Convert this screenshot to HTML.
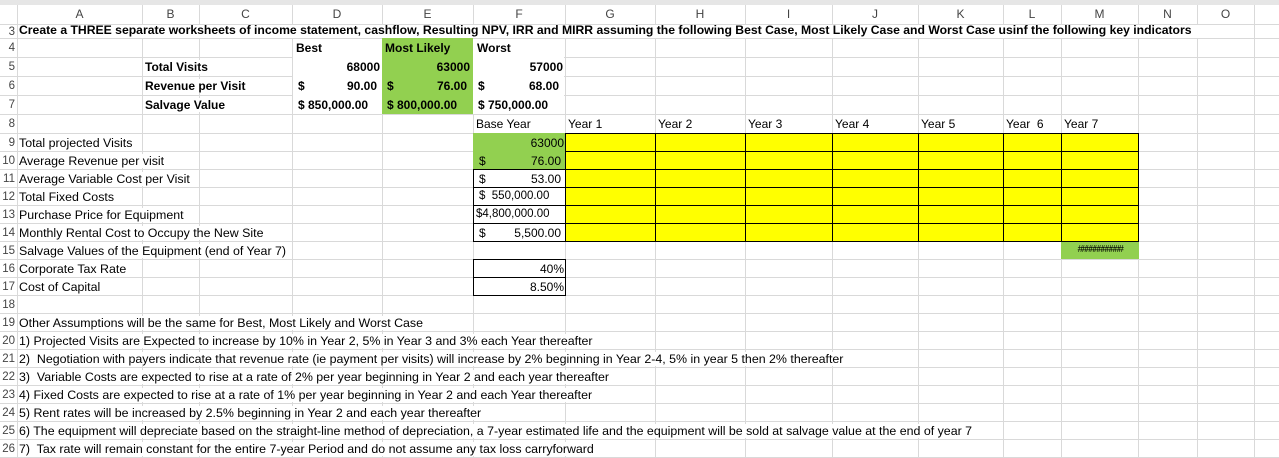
<!DOCTYPE html>
<html><head><meta charset="utf-8"><style>
body{margin:0;width:1279px;height:458px;overflow:hidden;background:#fff;font-family:"Liberation Sans",sans-serif;font-size:12.4px;color:#000;position:relative}
.a{position:absolute;white-space:nowrap;box-sizing:border-box}
.w{background:#fff;padding-right:2px}
.vl{position:absolute;width:1px;background:#d9d9d9}
.hl{position:absolute;height:1px;background:#d9d9d9}
.b{font-weight:bold;font-size:12px}
</style></head><body>
<div class="a" style="left:0;top:0;width:1279px;height:5px;background:#e6e6e6"></div>
<div id="g"></div>
<script>
var X=[17,142,199,292,382,473,565,655,745,832,918,1003,1061,1138,1197,1254,1279];
var Y=[24,38,57,76,95,114,133,151,169,187,205,223,241,259,277,295,313,331,349,367,385,403,421,439,457];
var L="ABCDEFGHIJKLMNO";var h="";
for(var i=0;i<X.length;i++){h+='<div class="vl" style="left:'+X[i]+'px;top:5px;height:453px"></div>';}
for(var j=0;j<Y.length;j++){h+='<div class="hl" style="left:0;top:'+Y[j]+'px;width:1279px"></div>';}
for(var i=0;i<15;i++){h+='<div class="a" style="left:'+X[i]+'px;top:7px;width:'+(X[i+1]-X[i])+'px;text-align:center;color:#444;font-size:12px">'+L[i]+'</div>';}
for(var j=0;j<Y.length-1;j++){h+='<div class="a" style="left:0;top:'+(Y[j]+1)+'px;height:'+(Y[j+1]-Y[j])+'px;width:15px;text-align:right;color:#444;font-size:11.5px;overflow:hidden;line-height:'+(Y[j+1]-Y[j])+'px">'+(j+3)+'</div>';}
document.getElementById('g').innerHTML=h;
</script>
<div class="a" style="left:293px;top:39px;width:271px;height:75px;background:#fff"></div>
<div class="a" style="left:18px;top:25px;width:1180px;height:13px;background:#fff"></div>
<div class="a" style="left:382px;top:38px;width:91px;height:76px;background:#92d050"></div>
<div class="a" style="left:473px;top:133px;width:92px;height:36px;background:#92d050"></div>
<div class="a" style="left:565px;top:133px;width:574px;height:108px;background:#ffff00"></div>
<div class="a" style="left:1061px;top:241px;width:78px;height:18px;background:#92d050"></div>
<div class="a" style="left:565px;top:133px;width:574px;height:109px;border:1px solid #000;border-left:none"></div>
<div id="bb"></div>
<script>
var s="";var cx=[565,655,745,832,918,1003,1061];
for(var i=0;i<cx.length;i++)s+='<div class="a" style="left:'+cx[i]+'px;top:133px;width:1px;height:108px;background:#000"></div>';
var ry=[151,169,187,205,223];
for(var i=0;i<ry.length;i++)s+='<div class="a" style="left:565px;top:'+ry[i]+'px;width:574px;height:1px;background:#000"></div>';
for(var i=2;i<ry.length;i++)s+='<div class="a" style="left:473px;top:'+ry[i]+'px;width:92px;height:1px;background:#000"></div>';
document.getElementById('bb').innerHTML=s;
</script>
<div class="a" style="left:473px;top:169px;width:93px;height:73px;border:1px solid #000;border-right:none"></div>
<div class="a" style="left:473px;top:259px;width:93px;height:37px;border:1px solid #000"></div>
<div class="a" style="left:473px;top:277px;width:93px;height:1px;background:#000"></div>

<div class="a b" style="left:19px;top:23px;font-size:12.2px">Create a THREE separate worksheets of income statement, cashflow, Resulting NPV, IRR and MIRR assuming the following Best Case, Most Likely Case and Worst Case usinf the following key indicators</div>
<div class="a b" style="left:296px;top:41px">Best</div>
<div class="a b" style="left:385px;top:41px">Most Likely</div>
<div class="a b" style="left:477px;top:41px">Worst</div>
<div class="a b w" style="left:145px;top:60px">Total Visits</div>
<div class="a b w" style="left:145px;top:79px">Revenue per Visit</div>
<div class="a b w" style="left:145px;top:98px">Salvage Value</div>
<div class="a b" style="left:292px;top:60px;width:88px;text-align:right">68000</div>
<div class="a b" style="left:382px;top:60px;width:88px;text-align:right">63000</div>
<div class="a b" style="left:473px;top:60px;width:90px;text-align:right">57000</div>
<div class="a b" style="left:298px;top:79px">$</div><div class="a b" style="left:292px;top:79px;width:85px;text-align:right">90.00</div>
<div class="a b" style="left:387px;top:79px">$</div><div class="a b" style="left:382px;top:79px;width:85px;text-align:right">76.00</div>
<div class="a b" style="left:478px;top:79px">$</div><div class="a b" style="left:473px;top:79px;width:86px;text-align:right">68.00</div>
<div class="a b" style="left:298px;top:98px">$ 850,000.00</div>
<div class="a b" style="left:387px;top:98px">$ 800,000.00</div>
<div class="a b" style="left:478px;top:98px">$ 750,000.00</div>

<div class="a" style="left:476px;top:117px;font-size:12px">Base Year</div>
<div class="a" style="left:568px;top:117px;font-size:12px">Year 1</div>
<div class="a" style="left:658px;top:117px;font-size:12px">Year 2</div>
<div class="a" style="left:748px;top:117px;font-size:12px">Year 3</div>
<div class="a" style="left:835px;top:117px;font-size:12px">Year 4</div>
<div class="a" style="left:921px;top:117px;font-size:12px">Year 5</div>
<div class="a" style="left:1006px;top:117px;font-size:12px">Year&nbsp; 6</div>
<div class="a" style="left:1064px;top:117px;font-size:12px">Year 7</div>

<div class="a w" style="left:19px;top:136px">Total projected Visits</div>
<div class="a w" style="left:19px;top:154px">Average Revenue per visit</div>
<div class="a w" style="left:19px;top:172px">Average Variable Cost per Visit</div>
<div class="a w" style="left:19px;top:190px">Total Fixed Costs</div>
<div class="a w" style="left:19px;top:208px">Purchase Price for Equipment</div>
<div class="a w" style="left:19px;top:226px">Monthly Rental Cost to Occupy the New Site</div>
<div class="a w" style="left:19px;top:244px">Salvage Values of the Equipment (end of Year 7)</div>
<div class="a w" style="left:19px;top:262px">Corporate Tax Rate</div>
<div class="a w" style="left:19px;top:280px">Cost of Capital</div>

<div class="a" style="left:473px;top:136px;width:91px;text-align:right;font-size:12px">63000</div>
<div class="a" style="left:479px;top:154px;font-size:12px">$</div><div class="a" style="left:473px;top:154px;width:88px;text-align:right;font-size:12px">76.00</div>
<div class="a" style="left:479px;top:172px;font-size:12px">$</div><div class="a" style="left:473px;top:172px;width:88px;text-align:right;font-size:12px">53.00</div>
<div class="a" style="left:479px;top:190px;font-size:11.5px">$&nbsp; 550,000.00</div>
<div class="a" style="left:476px;top:208px;font-size:11.5px">$4,800,000.00</div>
<div class="a" style="left:479px;top:226px;font-size:12px">$</div><div class="a" style="left:473px;top:226px;width:88px;text-align:right;font-size:12px">5,500.00</div>
<div class="a" style="left:1061px;top:244px;width:78px;text-align:center;font-size:10px;letter-spacing:-1.5px">###########</div>
<div class="a" style="left:473px;top:262px;width:91px;text-align:right;font-size:12px">40%</div>
<div class="a" style="left:473px;top:280px;width:91px;text-align:right;font-size:12px">8.50%</div>

<div class="a w" style="left:19px;top:316px">Other Assumptions will be the same for Best, Most Likely and Worst Case</div>
<div class="a w" style="left:19px;top:334px">1) Projected Visits are Expected to increase by 10% in Year 2, 5% in Year 3 and 3% each Year thereafter</div>
<div class="a w" style="left:19px;top:352px">2)&nbsp; Negotiation with payers indicate that revenue rate (ie payment per visits) will increase by 2% beginning in Year 2-4, 5% in year 5 then 2% thereafter</div>
<div class="a w" style="left:19px;top:370px">3)&nbsp; Variable Costs are expected to rise at a rate of 2% per year beginning in Year 2 and each year thereafter</div>
<div class="a w" style="left:19px;top:388px">4) Fixed Costs are expected to rise at a rate of 1% per year beginning in Year 2 and each Year thereafter</div>
<div class="a w" style="left:19px;top:406px">5) Rent rates will be increased by 2.5% beginning in Year 2 and each year thereafter</div>
<div class="a w" style="left:19px;top:424px">6) The equipment will depreciate based on the straight-line method of depreciation, a 7-year estimated life and the equipment will be sold at salvage value at the end of year 7</div>
<div class="a w" style="left:19px;top:442px">7)&nbsp; Tax rate will remain constant for the entire 7-year Period and do not assume any tax loss carryforward</div>
</body></html>
